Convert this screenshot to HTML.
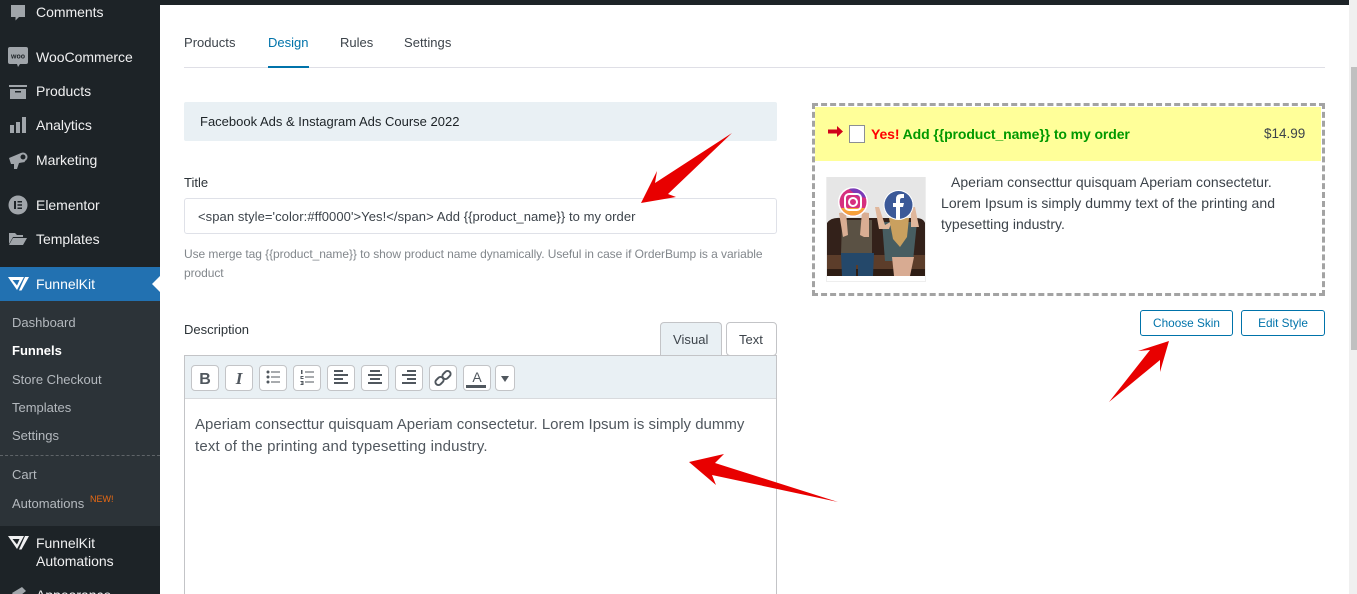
<!DOCTYPE html>
<html><head><meta charset="utf-8"><style>
html,body{margin:0;padding:0;width:1357px;height:594px;overflow:hidden;background:#fff}
body{position:relative;font-family:"Liberation Sans",sans-serif;font-size:13px;color:#3c434a}
div,span,svg{position:absolute;white-space:nowrap}
#side{left:0;top:0;width:160px;height:594px;background:#1d2327}
.m{left:36px;color:#f0f0f1;font-size:14px;line-height:18px;letter-spacing:-.02px}
.s{left:12px;color:#b4b9be;font-size:13px;line-height:18px}
.i{left:8px;fill:#a0a5aa}
.t{font-size:13px;line-height:18px;color:#3c434a}
.b{width:26px;height:24px;top:365px;background:#fff;border:1px solid #c3c4c7;border-radius:4px}
.b svg{left:0;top:0}
</style></head><body>
<div style="left:160px;top:0;width:1189px;height:5px;background:#1d2327"></div>
<div style="left:1349px;top:0;width:8px;height:594px;background:#f0f0f0"></div>
<div style="left:1351px;top:67px;width:6px;height:283px;background:#c0c0c0"></div>

<div id="side">
<div style="left:0;top:267px;width:160px;height:34px;background:#2271b1"></div>
<div style="left:0;top:301px;width:160px;height:225px;background:#2c3338"></div>
<div style="left:152px;top:276px;width:0;height:0;border:8px solid transparent;border-left:0;border-right-color:#fff"></div>
<div style="left:0;top:455px;width:160px;border-top:1px dashed #5f6468"></div>

<svg class="i" style="top:4px" width="20" height="17" viewBox="0 0 20 17"><path d="M3 1H17V13H11L7.500 16.500V13H3Z"/></svg>
<div class="m" style="top:3px">Comments</div>
<svg class="i" style="top:47px" width="20" height="20" viewBox="0 0 20 20"><rect y="0" width="20" height="17" rx="2"/><path d="M9 17H12L10 20Z"/><text x="10" y="11.500" font-size="7" font-weight="700" fill="#1d2327" text-anchor="middle" font-family="Liberation Sans">woo</text></svg>
<div class="m" style="top:48px">WooCommerce</div>
<svg class="i" style="top:84px" width="20" height="16" viewBox="0 0 20 16"><rect x="1" y="1" width="18" height="2"/><path d="M2 5H18V15H2ZM7 7V8.500H13V7Z" fill-rule="evenodd"/></svg>
<div class="m" style="top:82px">Products</div>
<svg class="i" style="top:117px" width="20" height="17" viewBox="0 0 20 17"><rect x="2" y="8" width="4" height="8"/><rect x="8" y="5" width="4" height="11"/><rect x="14" y="0" width="4" height="16"/></svg>
<div class="m" style="top:116px">Analytics</div>
<svg class="i" style="top:151px" width="20" height="19" viewBox="0 0 20 19"><path d="M1 7L13 2L17 11L11 12L9 18H6L6 13L3 13Z"/><circle cx="15" cy="6" r="3.500" fill="#1d2327" stroke="#a0a5aa" stroke-width="2"/></svg>
<div class="m" style="top:151px">Marketing</div>
<svg class="i" style="top:195px" width="20" height="20" viewBox="0 0 20 20"><circle cx="10" cy="10" r="9.500"/><path d="M6 6H8V14H6ZM9.500 6H14V7.500H9.500ZM9.500 9.300H14V10.800H9.500ZM9.500 12.500H14V14H9.500Z" fill="#1d2327"/></svg>
<div class="m" style="top:196px">Elementor</div>
<svg class="i" style="top:231px" width="20" height="16" viewBox="0 0 20 16"><path d="M1 13V2H7L9 4H15V6H5L1 13ZM5 7H19L15 14H1Z"/></svg>
<div class="m" style="top:230px">Templates</div>
<svg style="left:8px;top:277px" width="22" height="14" viewBox="0 0 22 14"><path d="M0 0H16L9 13ZM4.500 3L9 8.500L11.500 3Z" fill="#fff" fill-rule="evenodd"/><path d="M17 0H21L13.500 13.500H11Z" fill="#fff"/></svg>
<div class="m" style="top:275px;color:#fff">FunnelKit</div>

<div class="s" style="top:314px">Dashboard</div>
<div class="s" style="top:342px;color:#fff;font-weight:700">Funnels</div>
<div class="s" style="top:371px">Store Checkout</div>
<div class="s" style="top:399px">Templates</div>
<div class="s" style="top:427px">Settings</div>
<div class="s" style="top:466px">Cart</div>
<div class="s" style="top:495px">Automations</div>
<div style="left:90px;top:494px;font-size:9px;line-height:11px;color:#ea6a13">NEW!</div>

<svg style="left:8px;top:536px" width="22" height="14" viewBox="0 0 22 14"><path d="M0 0H16L9 13ZM4.500 3L9 8.500L11.500 3Z" fill="#f0f0f1" fill-rule="evenodd"/><path d="M17 0H21L13.500 13.500H11Z" fill="#f0f0f1"/></svg>
<div class="m" style="top:534px">FunnelKit</div>
<div class="m" style="top:552px">Automations</div>
<svg class="i" style="top:587px" width="20" height="10" viewBox="0 0 20 10"><path d="M4 6L14 0L18 4L8 12Z"/></svg>
<div class="m" style="top:586px">Appearance</div>
</div>

<div style="left:184px;top:67px;width:1141px;height:1px;background:#dfdfe6"></div>
<div style="left:268px;top:66px;width:41px;height:2px;background:#0073aa"></div>
<div class="t" style="left:184px;top:34px;letter-spacing:.02px">Products</div>
<div class="t" style="left:268px;top:34px;color:#0073aa">Design</div>
<div class="t" style="left:340px;top:34px">Rules</div>
<div class="t" style="left:404px;top:34px;letter-spacing:.05px">Settings</div>

<div style="left:184px;top:102px;width:593px;height:39px;background:#e9f0f4;border-radius:2px"></div>
<div class="t" style="left:200px;top:113px;color:#1d2327">Facebook Ads &amp; Instagram Ads Course 2022</div>

<div class="t" style="left:184px;top:174px;color:#2c3338">Title</div>
<div style="left:184px;top:198px;width:591px;height:34px;border:1px solid #dfe1e8;border-radius:3px;background:#fff"></div>
<div class="t" style="left:198px;top:208px;font-size:13px;letter-spacing:.07px">&lt;span style='color:#ff0000'&gt;Yes!&lt;/span&gt; Add {{product_name}} to my order</div>
<div style="left:184px;top:245px;font-size:12px;line-height:19px;color:#82878c;letter-spacing:-.065px">Use merge tag {{product_name}} to show product name dynamically. Useful in case if OrderBump is a variable<br>product</div>

<div class="t" style="left:184px;top:321px;color:#2c3338">Description</div>
<div style="left:660px;top:322px;width:60px;height:33px;background:#e9f0f4;border:1px solid #c3c4c7;border-bottom:0;border-radius:4px 4px 0 0"></div>
<div class="t" style="left:673px;top:331px;font-size:13px;letter-spacing:.05px">Visual</div>
<div style="left:726px;top:322px;width:49px;height:32px;background:#fff;border:1px solid #c3c4c7;border-radius:4px"></div>
<div class="t" style="left:739px;top:331px;font-size:13px">Text</div>

<div style="left:184px;top:355px;width:591px;height:250px;border:1px solid #c3c4c7;background:#fff"></div>
<div style="left:185px;top:356px;width:591px;height:42px;background:#e9f0f4;border-bottom:1px solid #d8dadd"></div>

<div class="b" style="left:191px"><svg width="26" height="24"><text x="13" y="18" text-anchor="middle" font-size="16" font-weight="700" fill="#50575e" font-family="Liberation Sans">B</text></svg></div>
<div class="b" style="left:225px"><svg width="26" height="24"><text x="13" y="18" text-anchor="middle" font-size="17" font-weight="700" font-style="italic" fill="#50575e" font-family="Liberation Serif">I</text></svg></div>
<div class="b" style="left:259px"><svg width="26" height="24" fill="#50575e"><circle cx="8" cy="6" r="1.500"/><circle cx="8" cy="11" r="1.500"/><circle cx="8" cy="16" r="1.500"/><path d="M11 5.500h9v1h-9zM11 10.500h9v1h-9zM11 15.500h9v1h-9z"/></svg></div>
<div class="b" style="left:293px"><svg width="26" height="24" fill="#50575e"><path d="M11 5.500h9v1h-9zM11 10.500h9v1h-9zM11 15.500h9v1h-9z"/><path d="M7 4h1.500v4h-1.500zM6.500 10h3v1h-2v1h2v1h-3zM6.500 15h3v4h-3v-1h2v-.5h-1.500v-1h1.500v-.500h-2z"/></svg></div>
<div class="b" style="left:327px"><svg width="26" height="24" fill="#50575e"><path d="M6 4h9v2h-9zM6 8h14v2h-14zM6 12h9v2h-9zM6 16h14v2h-14z"/></svg></div>
<div class="b" style="left:361px"><svg width="26" height="24" fill="#50575e"><path d="M8 4h10v2h-10zM6 8h14v2h-14zM8 12h10v2h-10zM6 16h14v2h-14z"/></svg></div>
<div class="b" style="left:395px"><svg width="26" height="24" fill="#50575e"><path d="M11 4h9v2h-9zM6 8h14v2h-14zM11 12h9v2h-9zM6 16h14v2h-14z"/></svg></div>
<div class="b" style="left:429px"><svg width="26" height="24" fill="none" stroke="#50575e" stroke-width="2"><rect x="5" y="12" width="9" height="6" rx="3" transform="rotate(-45 9.500 15)"/><rect x="12" y="6" width="9" height="6" rx="3" transform="rotate(-45 16.500 9)"/></svg></div>
<div class="b" style="left:463px"><svg width="26" height="24"><text x="13" y="16" text-anchor="middle" font-size="14" fill="#50575e" font-family="Liberation Sans">A</text><rect x="2" y="19" width="20" height="3" fill="#50575e"/></svg></div>
<div class="b" style="left:495px;width:18px"><svg width="18" height="24" fill="#50575e"><path d="M5 10h8l-4 6z"/></svg></div>

<div style="left:195px;top:414px;font-size:15px;line-height:22px;color:#50575e">Aperiam consecttur quisquam Aperiam consectetur. Lorem Ipsum is simply dummy<br><span style="position:static;letter-spacing:.17px">text of the printing and typesetting industry.</span></div>

<div style="left:812px;top:103px;width:507px;height:187px;border:3px dashed #a3a3a3"></div>
<div style="left:815px;top:107px;width:506px;height:54px;background:#ffff99"></div>
<svg style="left:828px;top:126px" width="16" height="12"><path d="M0 3.500H9V0L15 5.500L9 11V7.500H0Z" fill="#d0021b"/></svg>
<div style="left:849px;top:125px;width:14px;height:16px;border:1px solid #8c8f94;background:#fff"></div>
<div style="left:871px;top:125px;font-size:14px;line-height:18px;font-weight:700;color:#009900;letter-spacing:-.1px"><span style="position:static;color:#ff0000">Yes!</span> Add {{product_name}} to my order</div>
<div style="left:1264px;top:125px;font-size:13.500px;line-height:18px;color:#3c434a">$14.99</div>

<div style="left:826px;top:177px;width:98px;height:103px;border:1px solid #eee"></div>
<svg style="left:827px;top:177px" width="98" height="99" viewBox="0 0 98 99">
<rect width="98" height="99" fill="#e6e6e6"/>
<path d="M0 46Q4 40 14 41H85Q96 40 98 46V99H0Z" fill="#33211a"/>
<path d="M0 78H98V99H0Z" fill="#5c3d2a"/>
<path d="M0 92H98V99H0Z" fill="#2e1d14"/>
<path d="M15 43L45 43L45 78H14Z" fill="#5a5144"/>
<path d="M12 36L19 35L21 58L16 60ZM33 58L35 35L42 36L42 60L37 60Z" fill="#d9ad93"/>
<path d="M14 76H47L46 99H31V88H29V99H15Z" fill="#24486a"/>
<path d="M55 45H90L86 84H58Z" fill="#475d61"/>
<path d="M48 30L52 30L58 48L65 44L62 52L52 52ZM84 30L88 30L92 50L84 50Z" fill="#e0b79c"/>
<path d="M62 41H82L80 60L73 70L66 62Z" fill="#c9a05f"/>
<path d="M65 80H87L83 99H67Z" fill="#d8ab92"/>
<circle cx="26" cy="25" r="15" fill="#fff"/>
<circle cx="26" cy="25" r="13.500" fill="#d6307f"/>
<path d="M14 31A13.500 13.500 0 0 0 38 31Z" fill="#f7a13a"/>
<path d="M22 12A13.500 13.500 0 0 1 39 21L30 19Z" fill="#7a3bb8"/>
<rect x="18" y="17" width="16" height="16" rx="4" fill="none" stroke="#fff" stroke-width="2"/>
<circle cx="26" cy="25" r="4" fill="none" stroke="#fff" stroke-width="2"/>
<circle cx="71.500" cy="28" r="15" fill="#fff"/>
<circle cx="71.500" cy="28" r="14" fill="#3b5998"/>
<path d="M69 42V30H66V26H69V22Q69 17 74 17H77V21H75Q73 21 73 23V26H77L76 30H73V42Z" fill="#fff"/>
</svg>

<div style="left:941px;top:172px;font-size:14px;line-height:21px;color:#3c434a;letter-spacing:.02px"><span style="position:static;display:inline-block;width:10px"></span>Aperiam consecttur quisquam Aperiam consectetur.<br><span style="position:static;letter-spacing:.05px">Lorem Ipsum is simply dummy text of the printing and</span><br>typesetting industry.</div>

<div style="left:1140px;top:310px;width:91px;height:24px;border:1px solid #0073aa;border-radius:3px;background:#fff"></div>
<div style="left:1140px;top:315px;width:93px;text-align:center;font-size:11.800px;line-height:16px;color:#0073aa">Choose Skin</div>
<div style="left:1241px;top:310px;width:82px;height:24px;border:1px solid #0073aa;border-radius:3px;background:#fff"></div>
<div style="left:1241px;top:315px;width:84px;text-align:center;font-size:11.800px;line-height:16px;color:#0073aa">Edit Style</div>

<svg style="left:0;top:0" width="1357" height="594" viewBox="0 0 1357 594" fill="#e80000">
<path d="M732 133L668 194L676 197L641 203L657 171L655 183Z"/>
<path d="M1109 402L1150 350L1138 351L1169 341L1160 372L1160 360Z"/>
<path d="M689 462L724 454L715 463L838 502L712 475L716 485Z"/>
</svg>
</body></html>
